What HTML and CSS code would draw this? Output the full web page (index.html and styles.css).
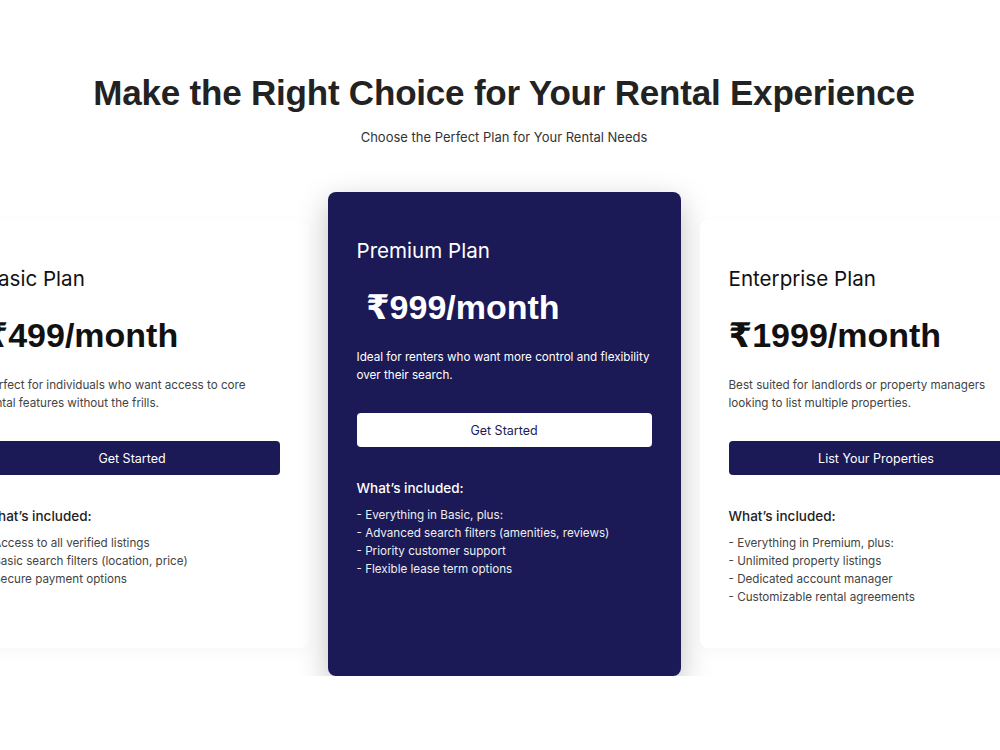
FILE: index.html
```html
<!DOCTYPE html>
<html lang="en">
<head>
    <meta charset="UTF-8" />
    <meta name="viewport" content="width=device-width, initial-scale=1.0"/>
    <title>Rental Plans</title>
    <link rel="stylesheet" href="styles.css">
</head>
<body>
    <section class="precios">
        <h1>Make the Right Choice for Your Rental Experience</h1>
        <p class="subtitulo">Choose the Perfect Plan for Your Rental Needs</p>

        <div class="planes">
            <div class="plan">
                <h2 class="plan-nombre">Basic Plan</h2>
                <div class="plan-precio">₹499/month</div>
                <p class="plan-descripcion">Perfect for individuals who want access to core rental features without the frills.</p>
                <button class="plan-boton">Get Started</button>
                <h4 class="plan-incluye">What’s included:</h4>
                <ul class="plan-lista">
                    <li>- Access to all verified listings</li>
                    <li>- Basic search filters (location, price)</li>
                    <li>- Secure payment options</li>
                </ul>
            </div>

            <div class="plan plan-destacado">
                <h2 class="plan-nombre">Premium Plan</h2>
                <div class="plan-precio">&nbsp;₹999/month</div>
                <p class="plan-descripcion">Ideal for renters who want more control and flexibility over their search.</p>
                <button class="plan-boton">Get Started</button>
                <h4 class="plan-incluye">What’s included:</h4>
                <ul class="plan-lista">
                    <li>- Everything in Basic, plus:</li>
                    <li>- Advanced search filters (amenities, reviews)</li>
                    <li>- Priority customer support</li>
                    <li>- Flexible lease term options</li>
                </ul>
            </div>

            <div class="plan">
                <h2 class="plan-nombre">Enterprise Plan</h2>
                <div class="plan-precio">₹1999/month</div>
                <p class="plan-descripcion">Best suited for landlords or property managers looking to list multiple properties.</p>
                <button class="plan-boton">List Your Properties</button>
                <h4 class="plan-incluye">What’s included:</h4>
                <ul class="plan-lista">
                    <li>- Everything in Premium, plus:</li>
                    <li>- Unlimited property listings</li>
                    <li>- Dedicated account manager</li>
                    <li>- Customizable rental agreements</li>
                </ul>
            </div>
        </div>
    </section>
</body>
</html>
```

FILE: styles.css
```css
* {
    margin: 0;
    padding: 0;
    box-sizing: border-box;
}

body {
    font-family: Inter, "Open Sans", sans-serif;
    background: #ffffff;
    color: #222222;
    overflow: hidden;
}

.precios {
    padding: 72px 0 0 8px;
}

h1 {
    font-family: "Liberation Sans", Arial, sans-serif;
    font-size: 35px;
    font-weight: bold;
    letter-spacing: -0.2px;
    text-align: center;
    color: #222222;
    line-height: 42px;
}

.subtitulo {
    text-align: center;
    font-size: 13px;
    line-height: 18px;
    color: #333333;
    margin-top: 14px;
}

.planes {
    display: flex;
    justify-content: center;
    align-items: center;
    gap: 19px;
    margin-top: 46px;
}

.plan {
    flex: 0 0 353px;
    height: 428px;
    padding: 45px 29px 0;
    background: #ffffff;
    border-radius: 8px;
    color: #111111;
    position: relative;
    box-shadow: 0 4px 14px rgba(0, 0, 0, 0.03);
}

.plan-destacado {
    height: 484px;
    background: #1b1956;
    color: #ffffff;
    box-shadow: 0 10px 30px rgba(0, 0, 0, 0.25);
    z-index: 0;
}

.plan:last-child {
    z-index: 1;
}

.plan-nombre {
    font-size: 20.6px;
    font-weight: 400;
    line-height: 28px;
}

.plan-precio {
    font-family: "Liberation Sans", Arial, "DejaVu Sans", sans-serif;
    font-size: 34px;
    font-weight: bold;
    line-height: 40px;
    margin-top: 22px;
}

.plan-descripcion {
    font-size: 11.65px;
    line-height: 18px;
    color: #444444;
    margin-top: 21px;
}

.plan-destacado .plan-descripcion {
    color: #ffffff;
}

.plan-boton {
    display: block;
    width: 100%;
    height: 34px;
    margin-top: 29px;
    border: none;
    border-radius: 4px;
    background: #1b1956;
    color: #ffffff;
    font-family: inherit;
    font-size: 12.5px;
    cursor: pointer;
}

.plan-destacado .plan-boton {
    background: #ffffff;
    color: #1b1956;
}

.plan-incluye {
    font-size: 13.5px;
    font-weight: 500;
    line-height: 20px;
    margin-top: 31px;
    color: #222222;
}

.plan-destacado .plan-incluye {
    color: #ffffff;
}

.plan-lista {
    list-style: none;
    margin-top: 8px;
    font-size: 11.65px;
    line-height: 18px;
    color: #444444;
}

.plan-destacado .plan-lista {
    color: #eeeeee;
}
```
